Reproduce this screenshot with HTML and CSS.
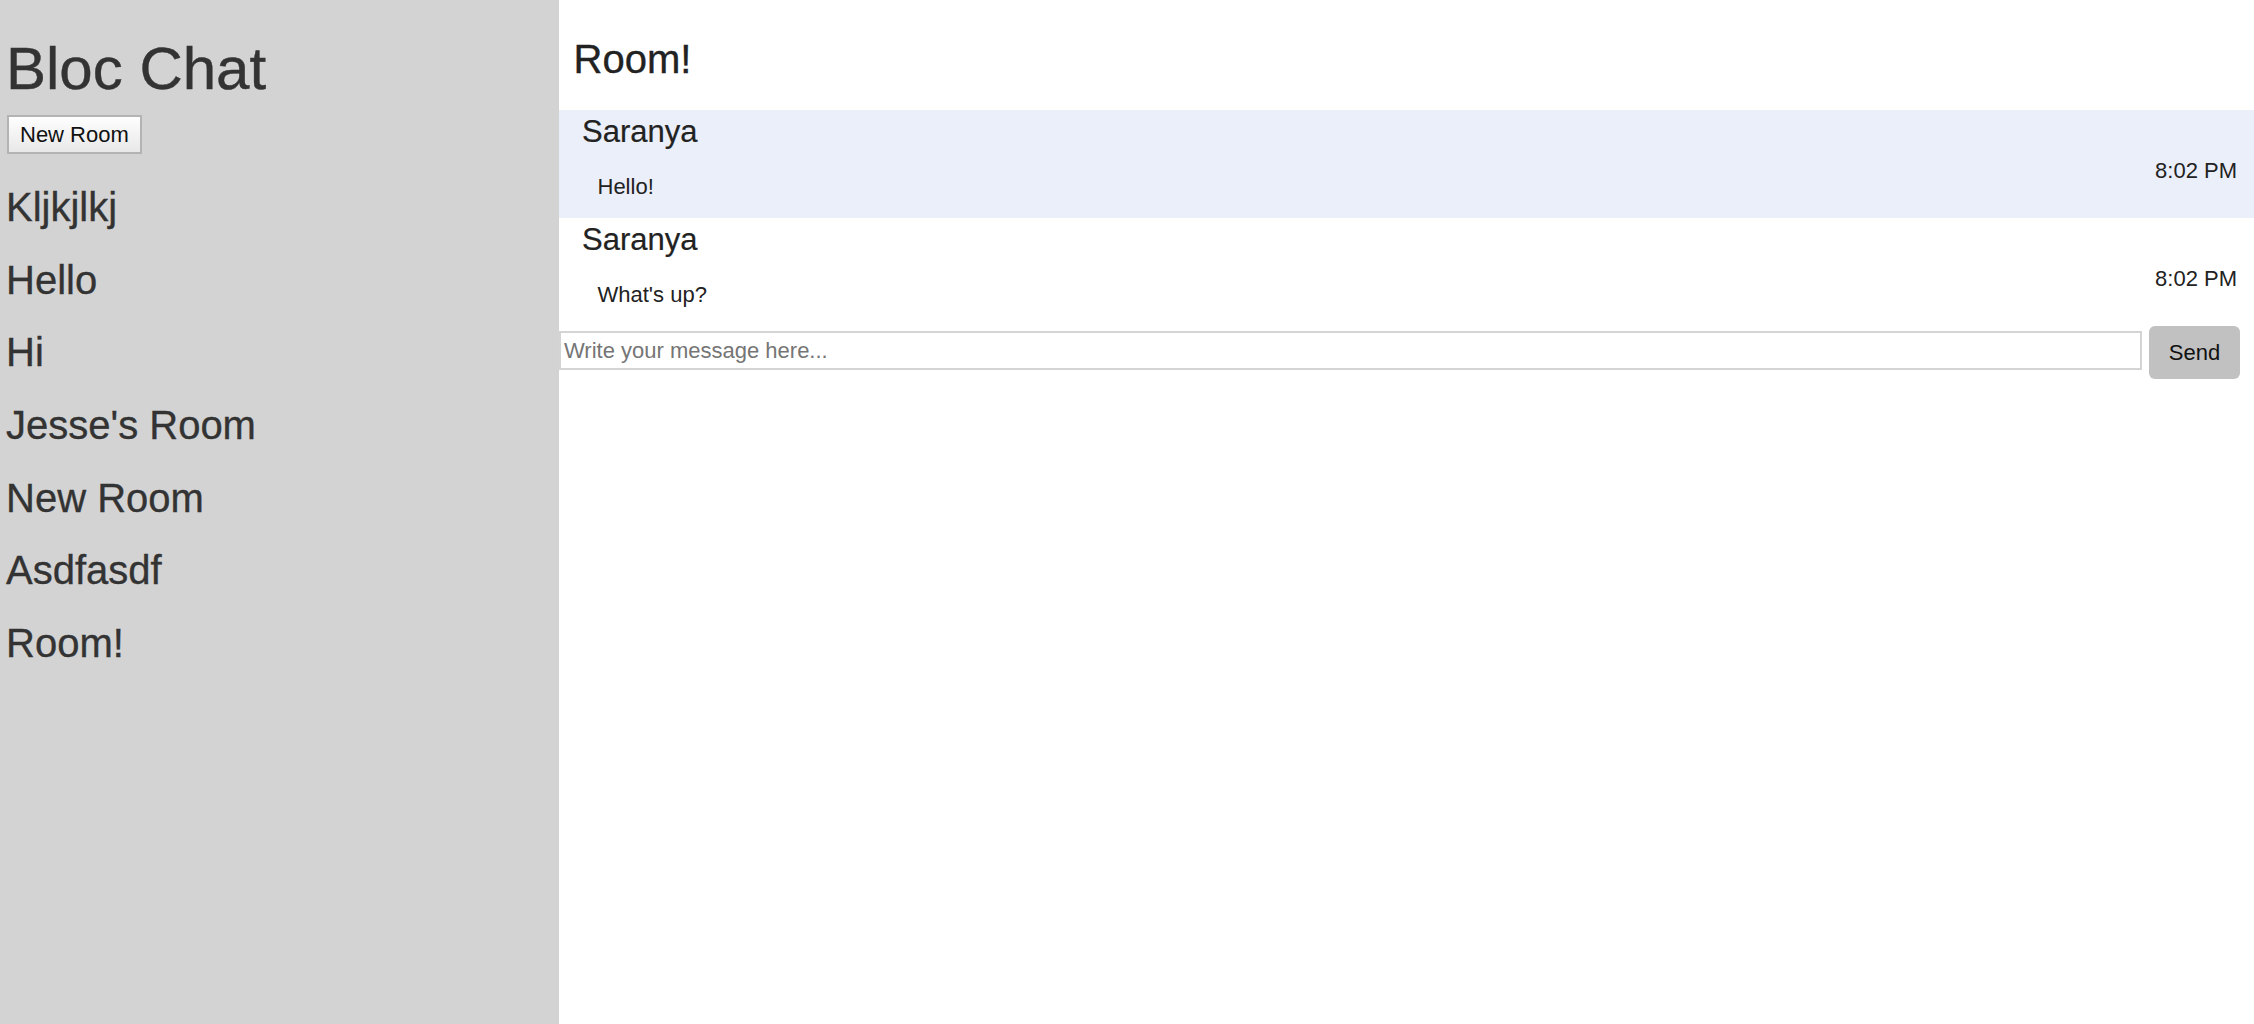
FILE: index.html
```html
<!DOCTYPE html>
<html lang="en">
<head>
<meta charset="utf-8">
<title>Bloc Chat</title>
<link rel="stylesheet" href="styles.css">
</head>
<body>
<div class="app">
  <aside class="sidebar">
    <h1 class="brand">Bloc Chat</h1>
    <button class="new-room" type="button">New Room</button>
    <ul class="rooms">
      <li>Kljkjlkj</li>
      <li>Hello</li>
      <li>Hi</li>
      <li>Jesse's Room</li>
      <li>New Room</li>
      <li>Asdfasdf</li>
      <li>Room!</li>
    </ul>
  </aside>
  <main class="chat">
    <h2 class="room-title">Room!</h2>
    <ul class="messages">
      <li class="message alt">
        <div class="msg-body">
          <div class="user">Saranya</div>
          <div class="text">Hello!</div>
        </div>
        <div class="time">8:02 PM</div>
      </li>
      <li class="message">
        <div class="msg-body">
          <div class="user">Saranya</div>
          <div class="text">What's up?</div>
        </div>
        <div class="time">8:02 PM</div>
      </li>
    </ul>
    <form class="composer">
      <input class="composer-input" type="text" placeholder="Write your message here...">
      <button class="send" type="button">Send</button>
    </form>
  </main>
</div>
</body>
</html>
```
FILE: styles.css
```css
html, body {
  margin: 0;
  padding: 0;
}

body {
  font-family: "Liberation Sans", Arial, Helvetica, sans-serif;
  background: #ffffff;
}

.app {
  display: flex;
  min-height: 100vh;
}

.sidebar {
  flex: none;
  width: 559px;
  box-sizing: border-box;
  padding: 0 0 0 6px;
  background: #d3d3d3;
  color: #333333;
}

.brand {
  margin: 34px 0 11px;
  font-size: 60px;
  line-height: 70px;
  font-weight: normal;
  -webkit-text-stroke: 0.4px #333333;
}

.new-room {
  display: block;
  margin: 0 0 0 1px;
  height: 39px;
  box-sizing: border-box;
  padding: 0 11px;
  font-family: inherit;
  font-size: 22px;
  color: #111111;
  border: 2px solid #b3b3b3;
  border-radius: 0;
  background: linear-gradient(#fefefe, #e8e8e8);
}

.rooms {
  list-style: none;
  margin: 17px 0 0;
  padding: 0;
}

.rooms li {
  font-size: 40px;
  line-height: 72.67px;
  -webkit-text-stroke: 0.35px #333333;
}

.chat {
  flex: 1;
  min-width: 0;
  color: #222222;
}

.room-title {
  margin: 0;
  padding: 35px 0 27px 14.5px;
  font-size: 40px;
  line-height: 48px;
  font-weight: normal;
  -webkit-text-stroke: 0.35px #222222;
}

.messages {
  list-style: none;
  margin: 0;
  padding: 0;
}

.message {
  display: flex;
  justify-content: space-between;
  align-items: flex-start;
  height: 108px;
  box-sizing: border-box;
  padding: 0 17px 0 0;
}

.message.alt {
  background: #ebeff9;
}

.user {
  padding-left: 23px;
  font-size: 31px;
  line-height: 44px;
  -webkit-text-stroke: 0.2px #222222;
}

.text {
  margin-top: 20px;
  padding-left: 38.5px;
  font-size: 22px;
  line-height: 26px;
}

.time {
  margin-top: 48.4px;
  font-size: 22px;
  line-height: 26px;
}

.composer {
  display: flex;
  align-items: flex-start;
  gap: 7px;
  margin: 0;
  padding: 0 14px 0 0;
}

.composer-input {
  flex: 1;
  min-width: 0;
  height: 39px;
  margin: 5px 0 0;
  box-sizing: border-box;
  padding: 0 3px;
  border: 2px solid #d4d4d4;
  border-radius: 0;
  font-family: inherit;
  font-size: 22px;
  color: #222222;
  outline: none;
}

.composer-input::placeholder {
  color: #757575;
}

.send {
  flex: none;
  width: 91px;
  height: 53px;
  border: none;
  border-radius: 6px;
  background: #c1c1c1;
  font-family: inherit;
  font-size: 22px;
  color: #111111;
}
```
